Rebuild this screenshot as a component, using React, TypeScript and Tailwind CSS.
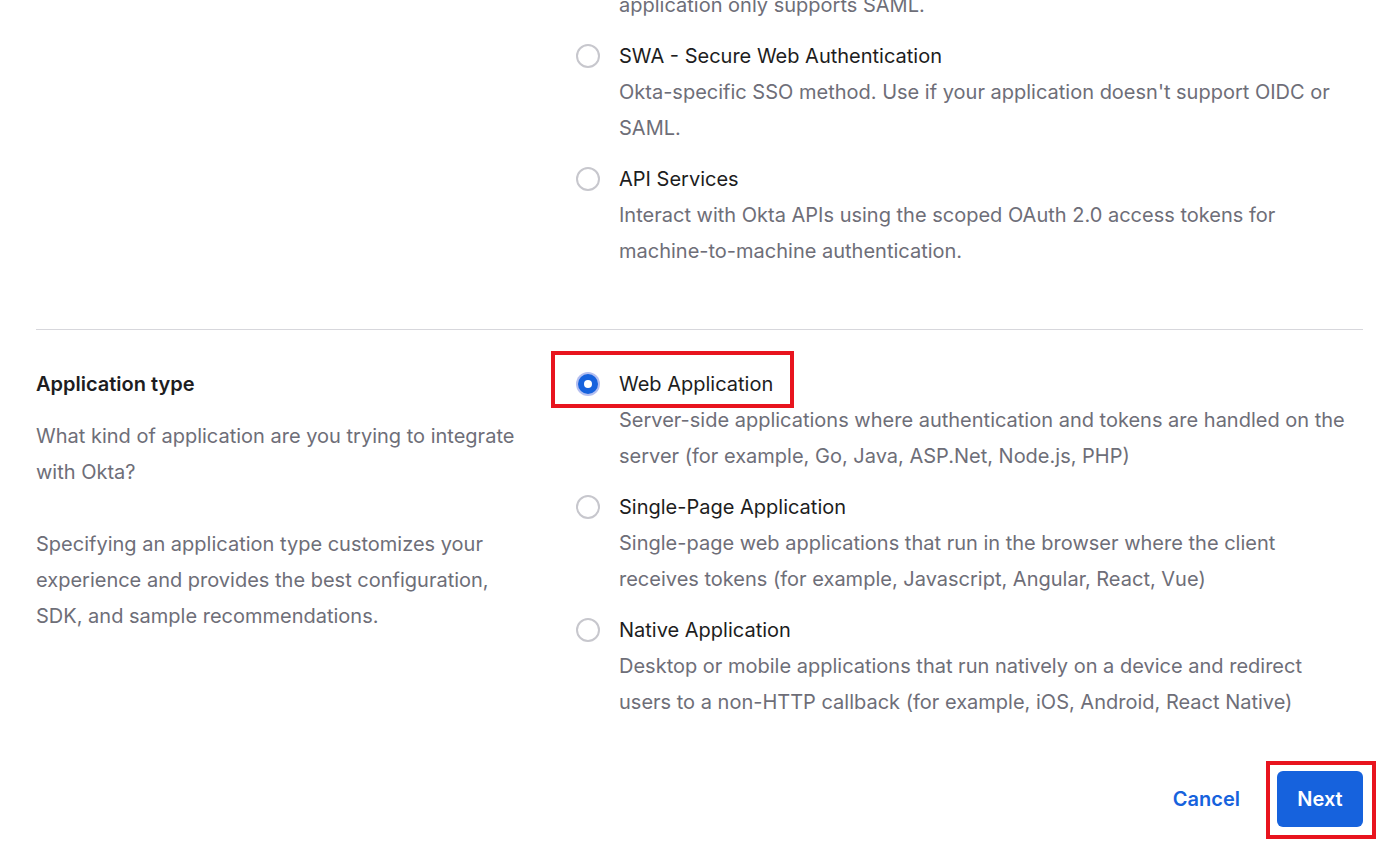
import * as React from 'react';

type Option = { id: string; label: string; lines: string[] };

const signInOptions: Option[] = [
  {
    id: 'swa',
    label: 'SWA - Secure Web Authentication',
    lines: ["Okta-specific SSO method. Use if your application doesn't support OIDC or", 'SAML.'],
  },
  {
    id: 'api',
    label: 'API Services',
    lines: ['Interact with Okta APIs using the scoped OAuth 2.0 access tokens for', 'machine-to-machine authentication.'],
  },
];

const appTypes: Option[] = [
  {
    id: 'web',
    label: 'Web Application',
    lines: [
      'Server-side applications where authentication and tokens are handled on the',
      'server (for example, Go, Java, ASP.Net, Node.js, PHP)',
    ],
  },
  {
    id: 'spa',
    label: 'Single-Page Application',
    lines: [
      'Single-page web applications that run in the browser where the client',
      'receives tokens (for example, Javascript, Angular, React, Vue)',
    ],
  },
  {
    id: 'native',
    label: 'Native Application',
    lines: [
      'Desktop or mobile applications that run natively on a device and redirect',
      'users to a non-HTTP callback (for example, iOS, Android, React Native)',
    ],
  },
];

function Radio({ checked }: { checked: boolean }) {
  if (checked) {
    return (
      <span className="w-6 h-6 rounded-full bg-[#b4bff0] flex items-center justify-center">
        <span className="w-[20px] h-[20px] rounded-full bg-[#1662dd] flex items-center justify-center">
          <span className="w-2 h-2 rounded-full bg-white" />
        </span>
      </span>
    );
  }
  return <span className="w-6 h-6 rounded-full border-[2.5px] border-[#c7c7cd] bg-white block" />;
}

function RadioOption({ option, checked, highlight }: { option: Option; checked: boolean; highlight?: boolean }) {
  return (
    <label className="flex cursor-pointer">
      <div className="w-[43px] h-9 flex items-center shrink-0">
        <Radio checked={checked} />
      </div>
      <div className="flex-1 whitespace-nowrap">
        <div className="relative">
          <span className="text-[#1d1d21]">{option.label}</span>
          {highlight && (
            <div className="absolute -left-[68px] -top-[15px] w-[243px] h-[57px] border-4 border-[#e8141e] pointer-events-none" />
          )}
        </div>
        <p className="text-[#6e6e78]">
          {option.lines.map((line, i) => (
            <React.Fragment key={i}>
              {i > 0 && <br />}
              {line}
            </React.Fragment>
          ))}
        </p>
      </div>
    </label>
  );
}

export default function App() {
  return (
    <div
      className="w-[1399px] h-[858px] overflow-hidden bg-white text-[20px] leading-9"
      style={{ fontFamily: 'Inter, "Noto Sans", sans-serif' }}
    >
      <div className="px-9 -mt-[13px]">
        <div className="grid grid-cols-[500px_1fr] gap-x-10 pb-[60px]">
          <div />
          <div className="flex flex-col gap-[15px]">
            <p className="pl-[43px] text-[#6e6e78]">application only supports SAML.</p>
            {signInOptions.map((o) => (
              <RadioOption key={o.id} option={o} checked={false} />
            ))}
          </div>
        </div>

        <div className="border-t border-[#d7d7dc] pt-[36px] grid grid-cols-[500px_1fr] gap-x-10">
          <div>
            <h3 className="font-semibold text-[#1d1d21]">Application type</h3>
            <p className="mt-4 text-[#6e6e78]">What kind of application are you trying to integrate with Okta?</p>
            <p className="mt-9 text-[#6e6e78] pr-6">
              Specifying an application type customizes your experience and provides the best configuration, SDK, and sample recommendations.
            </p>
          </div>
          <div className="flex flex-col gap-[15px]">
            {appTypes.map((o, i) => (
              <RadioOption key={o.id} option={o} checked={i === 0} highlight={i === 0} />
            ))}
          </div>
        </div>

        <div className="flex justify-end items-center gap-[37px] mt-[51px]">
          <button className="text-[#1662dd] font-semibold">Cancel</button>
          <div className="relative">
            <button className="w-[86px] h-[56px] rounded-md bg-[#1662dd] text-white font-semibold">Next</button>
            <div className="absolute -left-[11px] -top-[10px] w-[110px] h-[78px] border-4 border-[#e8141e] pointer-events-none" />
          </div>
        </div>
      </div>
    </div>
  );
}
